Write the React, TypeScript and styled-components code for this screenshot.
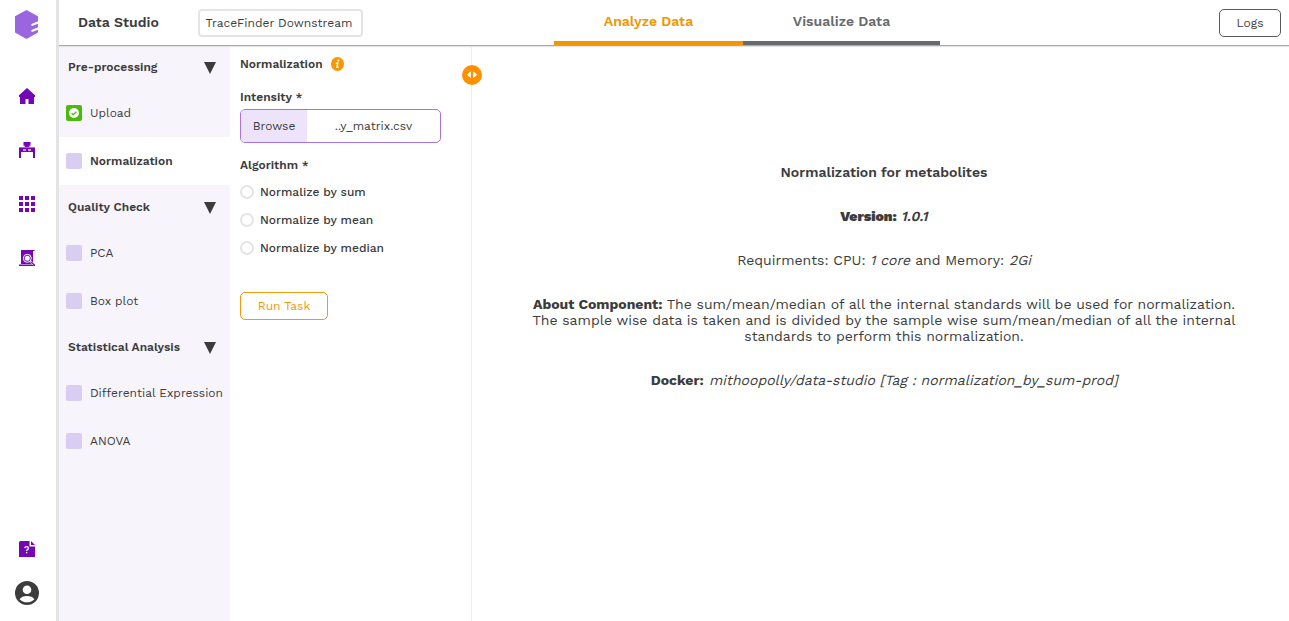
import React from "react";
import styled, { createGlobalStyle } from "styled-components";

const GlobalStyle = createGlobalStyle`
  * { box-sizing: border-box; }
  body {
    margin: 0;
    background: #fff;
    color: #3c3c3c;
    font-family: "Work Sans", Inter, "Liberation Sans", sans-serif;
    font-size: 12px;
    line-height: 16px;
    overflow: hidden;
  }
  button { font-family: inherit; color: inherit; }
`;

const Shell = styled.div`
  display: flex;
  height: 621px;
  width: 100%;
`;

const Rail = styled.nav`
  flex: 0 0 59px;
  display: flex;
  flex-direction: column;
  align-items: center;
  border-right: 3px solid #e4e4e4;
  padding: 10px 2px 16px 0;
`;

const RailLinks = styled.div`
  display: flex;
  flex-direction: column;
  gap: 38px;
  margin-top: 49px;
`;

const RailFooter = styled.div`
  display: flex;
  flex-direction: column;
  align-items: center;
  gap: 24px;
  margin-top: auto;
`;

const Icon = styled.svg`
  display: block;
  flex: none;
`;

const Main = styled.div`
  flex: 1;
  min-width: 0;
  display: flex;
  flex-direction: column;
`;

const Header = styled.header`
  flex: 0 0 46px;
  display: flex;
  align-items: flex-start;
  margin-bottom: -1px;
  border-bottom: 1px solid #a9a9a9;
  box-shadow: 0 1px 1px #e4e4e4;
  position: relative;
  z-index: 1;
`;

const Title = styled.h1`
  width: 139px;
  margin: 0;
  padding: 14px 0 0 19px;
  font-size: 14px;
  font-weight: 600;
  line-height: 16px;
  white-space: nowrap;
`;

const PipelineName = styled.div`
  width: 165px;
  height: 28px;
  margin-top: 9px;
  border: 2px solid #e4e4e4;
  border-radius: 4px;
  line-height: 24px;
  padding-left: 5.5px;
  white-space: nowrap;
`;

const Tabs = styled.div`
  display: flex;
  margin-left: 191px;
`;

const Tab = styled.div<{ $color: string; $width: number }>`
  width: ${(p) => p.$width}px;
  height: 45px;
  padding-top: 13px;
  border-bottom: 4px solid ${(p) => p.$color};
  color: ${(p) => p.$color};
  font-size: 14px;
  font-weight: 600;
  text-align: center;
`;

const LogsButton = styled.button`
  width: 62px;
  height: 28px;
  margin: 9px 8px 0 auto;
  padding: 0;
  background: #fff;
  border: 1px solid #5a5a5a;
  border-radius: 5px;
  font-size: 12px;
`;

const Body = styled.div`
  flex: 1;
  min-height: 0;
  display: flex;
`;

const Sidebar = styled.aside`
  flex: 0 0 171px;
  background: #f7f4fc;
`;

const Group = styled.div`
  height: 44px;
  display: flex;
  align-items: center;
  justify-content: space-between;
  padding: 0 14px 0 9px;
  font-weight: 600;
`;

const Step = styled.div<{ $active?: boolean }>`
  height: 48px;
  display: flex;
  align-items: center;
  gap: 8px;
  padding-left: 7px;
  white-space: nowrap;
  background: ${(p) => (p.$active ? "#fff" : "transparent")};
  font-weight: ${(p) => (p.$active ? 600 : 400)};
`;

const Box = styled.span<{ $done?: boolean }>`
  width: 16px;
  height: 16px;
  border-radius: 2px;
  background: ${(p) => (p.$done ? "#4bbb0b" : "#dacdf2")};
`;

const Label = styled.span`
  white-space: nowrap;
`;

const FormPanel = styled.section`
  flex: 0 0 242px;
  display: flex;
  flex-direction: column;
  align-items: flex-start;
  border-right: 1px solid #eee;
  padding: 11px 10px 0;
  position: relative;
`;

const FormTitle = styled.div`
  display: flex;
  align-items: center;
  gap: 8px;
  height: 16px;
  font-weight: 600;
`;

const FieldName = styled.div<{ $top: number }>`
  margin-top: ${(p) => p.$top}px;
  height: 16px;
  font-weight: 600;
`;

const FilePicker = styled.div`
  display: flex;
  width: 201px;
  height: 34px;
  margin-top: 4px;
  border: 1px solid #a873dc;
  border-radius: 5px;
  overflow: hidden;
  line-height: 32px;
`;

const Browse = styled.span`
  width: 66px;
  background: #ede4fc;
  text-align: center;
`;

const FileName = styled.span`
  flex: 1;
  text-align: center;
`;

const Radios = styled.div`
  display: flex;
  flex-direction: column;
  gap: 12px;
  margin-top: 11px;
`;

const Radio = styled.div`
  display: flex;
  align-items: center;
  gap: 6px;
  height: 16px;
  font-weight: 500;
`;

const Dot = styled.span`
  width: 14px;
  height: 14px;
  border: 2px solid #e4e4e4;
  border-radius: 50%;
`;

const RunButton = styled.button`
  width: 88px;
  height: 28px;
  margin-top: 36px;
  padding: 0;
  background: #fff;
  border: 1px solid #f09a0c;
  border-radius: 5px;
  color: #f09a0c;
  font-size: 12px;
`;

const Handle = styled.div`
  position: absolute;
  top: 20px;
  right: -11px;
`;

const Details = styled.section`
  flex: 1;
  display: flex;
  flex-direction: column;
  align-items: center;
  gap: 28px;
  padding: 119px 0 0 7px;
  font-size: 14px;
  text-align: center;
`;

const Line = styled.div<{ $weight?: number }>`
  height: 16px;
  white-space: nowrap;
  font-weight: ${(p) => p.$weight ?? 400};
`;

const Strong = styled.b<{ $weight?: number }>`
  font-weight: ${(p) => p.$weight ?? 700};
`;

const Slanted = styled.i`
  display: inline-block;
  font-style: normal;
  transform: skewX(-14deg);
  transform-origin: 50% 13px;
`;

const CaretIcon = styled(Icon)`
  margin-top: 2px;
`;

const purple = "#7406b5";

const Logo = () => (
  <Icon width="24" height="29" viewBox="0 0 24 29">
    <path fill="#9a66df" d="M11.500 0 23 6.300V11.300L16.500 14q-.8 1.200.4 2.100L23 13.700V17.200L16.500 20q-.8 1.200.4 2.100L23 19.700V22.400L11.500 29 0 22.400V6.300z" />
  </Icon>
);

const HomeIcon = () => (
  <Icon width="16" height="16" viewBox="0 0 16 16">
    <path fill={purple} d="M8 0 16 7.2V9h-1v7H9.500v-5h-3v5H1V9H0V7.200z" />
  </Icon>
);

const DeskIcon = () => (
  <Icon width="16" height="16" viewBox="0 0 16 16" fill={purple}>
    <path d="M4.500 0h7v3.800H9.500L11 5h5v11h-2v-6H2v6H0V5h5l1.500-1.200h-2z" />
    <path fill="#e4c9f3" d="M4 7.200h3v1.600H4zM9 7.200h3v1.600H9zM0 5.500h16v.5H0z" />
  </Icon>
);

const GridIcon = () => (
  <Icon width="16" height="16" viewBox="0 0 16 16">
    <path fill={purple} d="M0 0h4v4H0zM6 0h4v4H6zM12 0h4v4h-4zM0 6h4v4H0zM6 6h4v4H6zM12 6h4v4h-4zM0 12h4v4H0zM6 12h4v4H6zM12 12h4v4h-4z" />
  </Icon>
);

const InspectIcon = () => (
  <Icon width="16" height="16" viewBox="0 0 16 16">
    <path fill={purple} d="M2 0h13.500v1H14v13H2zM0 14.600h16V16H0z" />
    <circle cx="8.300" cy="8.300" r="4" fill={purple} stroke="#fff" strokeWidth="1" />
    <circle cx="8.300" cy="8.300" r="2.500" fill="#fff" />
    <path stroke="#fff" strokeWidth="2" d="m11.500 11.500 3.500 3.300" />
    <path stroke={purple} strokeWidth="1.200" d="m12 12 3.500 3" />
  </Icon>
);

const HelpIcon = () => (
  <Icon width="16" height="16" viewBox="0 0 16 16">
    <path fill={purple} d="M1.500 0H10.500v5.500H16V16H0V1.500Q0 0 1.500 0zM12 0l4 4h-4z" />
    <path fill="none" stroke="#fff" strokeWidth="1.300" d="M5.800 7.200q.2-1.500 1.800-1.500 1.800 0 1.800 1.500 0 .9-1 1.400-.8.500-.8 1.300M7.600 11v1.300" />
  </Icon>
);

const AccountIcon = () => (
  <Icon width="24" height="24" viewBox="0 0 24 24">
    <circle cx="12" cy="12" r="12" fill="#3c3c3c" />
    <circle cx="12" cy="8.800" r="4.300" fill="#fff" />
    <path fill="#fff" d="M4.600 18.200q2.400-3.300 7.400-3.300t7.400 3.300Q16.600 21.300 12 21.300t-7.400-3.100z" />
  </Icon>
);

const Caret = () => (
  <CaretIcon width="12" height="12" viewBox="0 0 12 12">
    <path fill="#3c3c3c" d="M0 0h12L6 12z" />
  </CaretIcon>
);

const CheckIcon = () => (
  <Icon width="16" height="16" viewBox="0 0 16 16">
    <circle cx="8" cy="8" r="5" fill="#fff" />
    <path fill="none" stroke="#4bbb0b" strokeWidth="1.300" d="m5.700 8.200 1.600 1.500 3-3" />
  </Icon>
);

const InfoIcon = () => (
  <Icon width="13" height="14" viewBox="0 0 13 14">
    <ellipse cx="6.500" cy="7" rx="6.500" ry="7" fill="#f89800" />
    <circle cx="7.300" cy="3.500" r="1.100" fill="#fff" />
    <path fill="none" stroke="#fff" strokeWidth="1.400" d="M4.800 6.100h2L5.900 10.300h1.700" />
  </Icon>
);

const ResizeIcon = () => (
  <Icon width="20" height="20" viewBox="0 0 20 20">
    <circle cx="10" cy="10" r="10" fill="#ff9100" />
    <path fill="#fff" stroke="#fff" strokeLinejoin="round" d="M8.300 7v5.500L5.500 9.700zM11.700 7v5.500l2.800-2.800z" />
  </Icon>
);

type StepItem = { name: string; done?: boolean; active?: boolean };
type StepGroup = { name: string; steps: StepItem[] };

const groups: StepGroup[] = [
  {
    name: "Pre-processing",
    steps: [
      { name: "Upload", done: true },
      { name: "Normalization", active: true },
    ],
  },
  {
    name: "Quality Check",
    steps: [{ name: "PCA" }, { name: "Box plot" }],
  },
  {
    name: "Statistical Analysis",
    steps: [{ name: "Differential Expression" }, { name: "ANOVA" }],
  },
];

const algorithms = ["Normalize by sum", "Normalize by mean", "Normalize by median"];

export default function App() {
  return (
    <Shell>
      <GlobalStyle />
      <Rail>
        <Logo />
        <RailLinks>
          <HomeIcon />
          <DeskIcon />
          <GridIcon />
          <InspectIcon />
        </RailLinks>
        <RailFooter>
          <HelpIcon />
          <AccountIcon />
        </RailFooter>
      </Rail>
      <Main>
        <Header>
          <Title>Data Studio</Title>
          <PipelineName>TraceFinder Downstream</PipelineName>
          <Tabs>
            <Tab $color="#f09600" $width={189}>Analyze Data</Tab>
            <Tab $color="#666b70" $width={197}>Visualize Data</Tab>
          </Tabs>
          <LogsButton>Logs</LogsButton>
        </Header>
        <Body>
          <Sidebar>
            {groups.map((group) => (
              <React.Fragment key={group.name}>
                <Group>
                  <Label>{group.name}</Label>
                  <Caret />
                </Group>
                {group.steps.map((step) => (
                  <Step key={step.name} $active={step.active}>
                    <Box $done={step.done}>{step.done && <CheckIcon />}</Box>
                    <Label>{step.name}</Label>
                  </Step>
                ))}
              </React.Fragment>
            ))}
          </Sidebar>
          <FormPanel>
            <FormTitle>
              <Label>Normalization</Label>
              <InfoIcon />
            </FormTitle>
            <FieldName $top={17}>Intensity *</FieldName>
            <FilePicker>
              <Browse>Browse</Browse>
              <FileName>..y_matrix.csv</FileName>
            </FilePicker>
            <FieldName $top={14}>Algorithm *</FieldName>
            <Radios>
              {algorithms.map((name) => (
                <Radio key={name}>
                  <Dot />
                  <Label>{name}</Label>
                </Radio>
              ))}
            </Radios>
            <RunButton>Run Task</RunButton>
            <Handle>
              <ResizeIcon />
            </Handle>
          </FormPanel>
          <Details>
            <Line $weight={600}>Normalization for metabolites</Line>
            <Line $weight={600}>
              <Strong $weight={900}>Version:</Strong> <Slanted>1.0.1</Slanted>
            </Line>
            <Line>
              Requirments: CPU: <Slanted>1 core</Slanted> and Memory: <Slanted>2Gi</Slanted>
            </Line>
            <div>
              <Line>
                <Strong>About Component:</Strong> The sum/mean/median of all the internal standards will be used for normalization.
              </Line>
              <Line>The sample wise data is taken and is divided by the sample wise sum/mean/median of all the internal</Line>
              <Line>standards to perform this normalization.</Line>
            </div>
            <Line>
              <Strong>Docker:</Strong> <Slanted>mithoopolly/data-studio [Tag : normalization_by_sum-prod]</Slanted>
            </Line>
          </Details>
        </Body>
      </Main>
    </Shell>
  );
}
